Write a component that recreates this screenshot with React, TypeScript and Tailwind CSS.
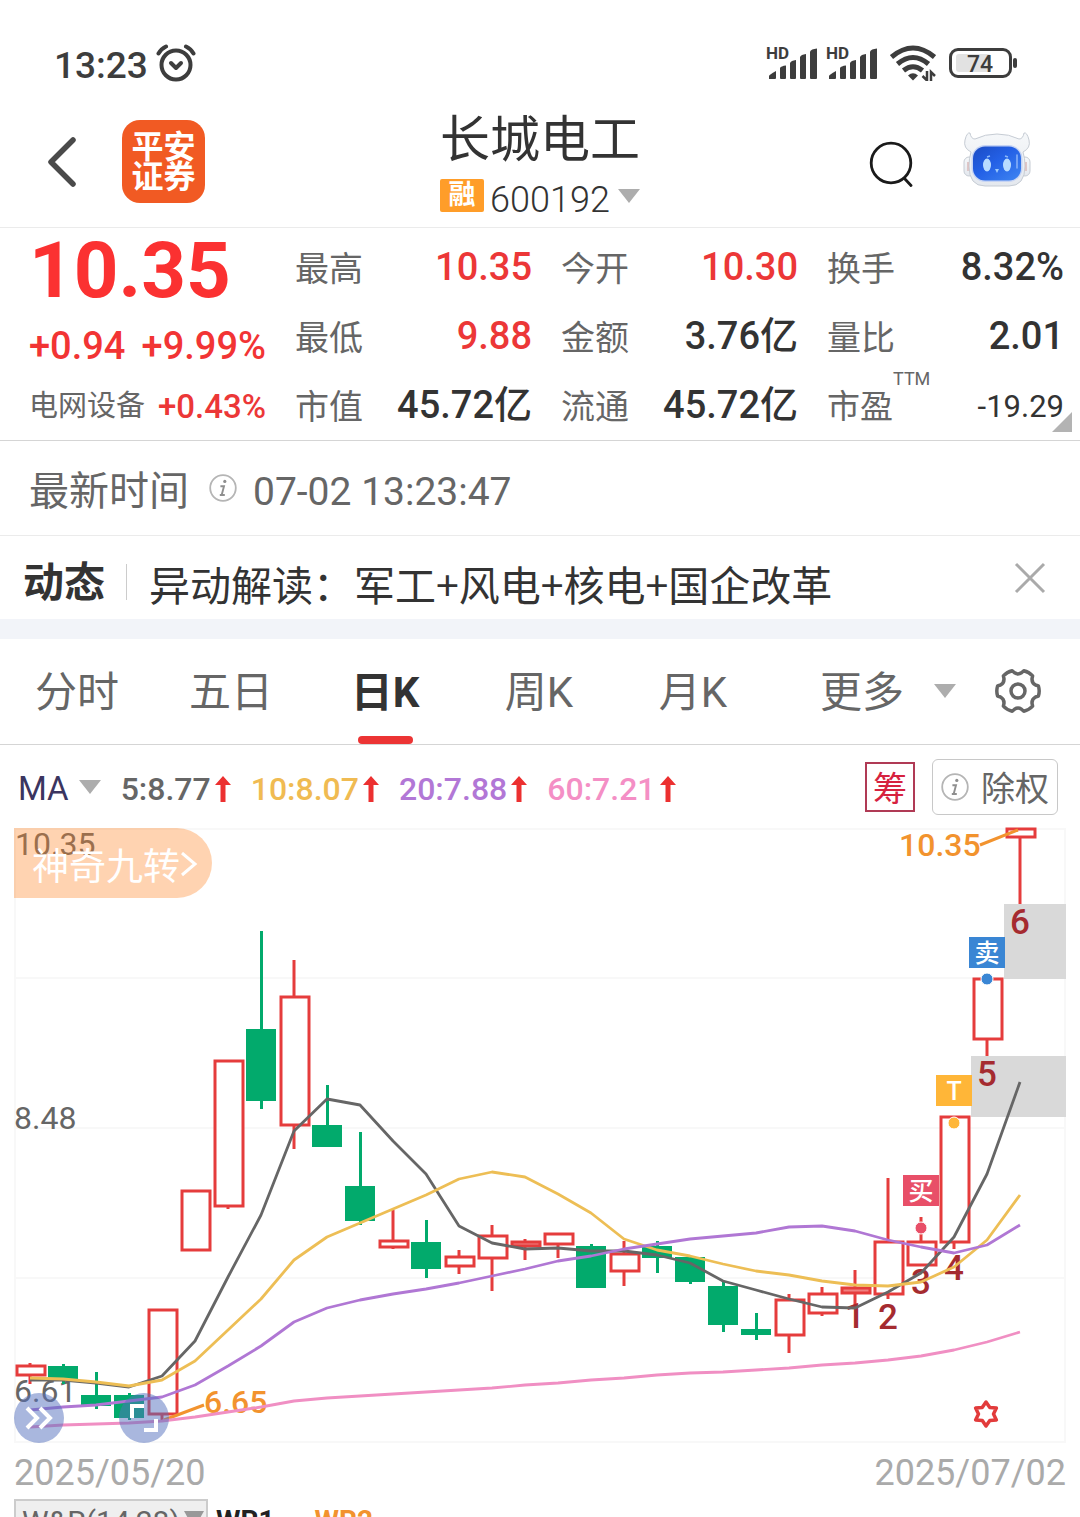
import React from "react";

type Candle = { up: boolean; high: number; top: number; bottom: number; low: number };

const c = (up: boolean, high: number, top: number, bottom: number, low: number): Candle => ({ up, high, top, bottom, low });

const candles: Candle[] = [
  c(true, 1363, 1365, 1376, 1384),
  c(false, 1364, 1366, 1379, 1384),
  c(false, 1372, 1395, 1406, 1409),
  c(false, 1393, 1395, 1418, 1420),
  c(true, 1309, 1309, 1415, 1421),
  c(true, 1190, 1190, 1251, 1251),
  c(true, 1060, 1060, 1207, 1209),
  c(false, 931, 1029, 1101, 1109),
  c(true, 960, 996, 1126, 1149),
  c(false, 1085, 1125, 1147, 1147),
  c(false, 1132, 1186, 1221, 1225),
  c(true, 1210, 1240, 1248, 1249),
  c(false, 1220, 1242, 1269, 1278),
  c(true, 1250, 1256, 1267, 1274),
  c(true, 1225, 1235, 1259, 1291),
  c(true, 1239, 1241, 1247, 1260),
  c(true, 1233, 1233, 1245, 1258),
  c(false, 1244, 1246, 1288, 1288),
  c(true, 1241, 1253, 1272, 1286),
  c(false, 1241, 1246, 1258, 1273),
  c(false, 1257, 1257, 1282, 1284),
  c(false, 1282, 1286, 1325, 1332),
  c(false, 1313, 1329, 1335, 1340),
  c(true, 1294, 1299, 1336, 1353),
  c(true, 1287, 1293, 1314, 1316),
  c(true, 1270, 1287, 1294, 1307),
  c(true, 1178, 1241, 1295, 1299),
  c(true, 1217, 1241, 1266, 1266),
  c(true, 1116, 1116, 1243, 1249),
  c(true, 978, 978, 1040, 1056),
  c(true, 828, 828, 838, 904),
];

const ma5 = [1380, 1380, 1383, 1387, 1376, 1341, 1277, 1215, 1131, 1099, 1105, 1141, 1174, 1226, 1243, 1249, 1248, 1251, 1251, 1255, 1263, 1281, 1290, 1299, 1307, 1308, 1292, 1273, 1237, 1174, 1082];
const ma10 = [1378, 1379, 1382, 1386, 1380, 1361, 1330, 1299, 1260, 1237, 1223, 1209, 1195, 1179, 1172, 1177, 1194, 1213, 1239, 1250, 1256, 1264, 1271, 1275, 1281, 1285, 1286, 1282, 1267, 1240, 1195];
const ma20 = [1410, 1407, 1405, 1401, 1397, 1385, 1366, 1346, 1322, 1308, 1300, 1294, 1289, 1283, 1276, 1269, 1261, 1256, 1249, 1244, 1239, 1236, 1233, 1227, 1226, 1231, 1240, 1247, 1253, 1245, 1225];
const ma60 = [1427, 1425, 1424, 1423, 1421, 1417, 1412, 1407, 1401, 1398, 1396, 1394, 1392, 1390, 1388, 1385, 1383, 1380, 1378, 1375, 1373, 1372, 1370, 1368, 1365, 1363, 1360, 1356, 1350, 1342, 1332];

const xOf = (i: number) => 30 + 33 * i;
const line = (ys: number[]) => ys.map((y, i) => `${xOf(i)},${y}`).join(" ");

const polar = (r: number, deg: number) => {
  const a = (deg * Math.PI) / 180;
  return `${(r * Math.cos(a)).toFixed(1)} ${(r * Math.sin(a)).toFixed(1)}`;
};
const gearPath =
  [0, 60, 120, 180, 240, 300]
    .map((a, i) => `${i === 0 ? "M" : "L"}${polar(21, a - 14)} Q${polar(22, a)} ${polar(21, a + 14)} L${polar(18.5, a + 19)} Q${polar(16, a + 30)} ${polar(18.5, a + 41)}`)
    .join(" ") + "Z";
const starPath =
  Array.from({ length: 12 }, (_, i) => `${i === 0 ? "M" : "L"}${polar(i % 2 ? 7.5 : 12, i * 30 - 90)}`).join(" ") + "Z";

function Caret() {
  return (
    <svg className="h-[14px] w-[22px] shrink-0" viewBox="0 0 22 14" aria-hidden="true">
      <path d="M0 0H22L11 14Z" fill="#adadad" />
    </svg>
  );
}

function Info() {
  return (
    <svg className="size-7 shrink-0" viewBox="0 0 28 28" aria-hidden="true">
      <circle cx="14" cy="14" r="12.8" fill="none" stroke="#b5b5b5" strokeWidth="1.8" />
      <circle cx="15.8" cy="7.4" r="1.6" fill="#8f8f8f" />
      <path d="M11.400 12.200H15L12.800 20.600M10.800 21H15.800" fill="none" stroke="#8f8f8f" strokeWidth="1.900" />
    </svg>
  );
}

function Signal() {
  return (
    <svg className="h-9 w-[52px] overflow-visible" viewBox="0 0 52 36" fill="#3d3d3d" role="img" aria-label="HD signal">
      <text x="0" y="14" fontFamily="Roboto, sans-serif" fontWeight="700" fontSize="17">HD</text>
      <path d="M3 34V31Q3 30 10 26V33Q10 34 9 34H4Q3 34 3 34Z" />
      <path d="M14 33V23Q15 21 20 20.500V33Q20 34 19 34H15Q14 34 14 33Z" />
      <path d="M24 33V18Q25 15.500 30 15V33Q30 34 29 34H25Q24 34 24 33Z" />
      <path d="M34 33V12Q35 9.500 40 9V33Q40 34 39 34H35Q34 34 34 33Z" />
      <path d="M44 33V6.500Q45 4 51 3.500V33Q51 34 50 34H45Q44 34 44 33Z" />
    </svg>
  );
}

function StatusBar() {
  return (
    <div className="flex h-[100px] items-center justify-between pt-[26px] pr-[62px] pl-[54px] text-[#3d3d3d]">
      <div className="flex items-center gap-2">
        <span className="pt-1 text-[37px] leading-none font-medium">13:23</span>
        <svg className="size-10" viewBox="0 0 40 40" fill="none" stroke="#3d3d3d" strokeWidth="4" strokeLinecap="round" strokeLinejoin="round" aria-label="闹钟">
          <circle cx="20" cy="22" r="14.500" />
          <path d="M15 20L20 25L25 20" />
          <path d="M2.500 10.500Q5 6 10 3.500M37.500 10.500Q35 6 30 3.500" />
        </svg>
      </div>
      <div className="flex items-center gap-2">
        <Signal />
        <Signal />
        <svg className="mx-1 h-9 w-[46px]" viewBox="0 0 46 36" fill="none" stroke="#3d3d3d" strokeWidth="5" aria-label="Wi-Fi">
          <path d="M1.500 12Q23 -6 44.500 12" />
          <path d="M7.500 19Q23 6 38.500 19" />
          <path d="M13.500 25.500Q23 18 32.500 25.500" />
          <path d="M18 30.500Q23 26 28 30.500L23 35.500Z" fill="#3d3d3d" stroke="none" />
          <path d="M37 26V35.500L32.500 31M41 36V27L45 31" strokeWidth="2.500" />
        </svg>
        <svg className="h-[30px] w-[70px] overflow-visible" viewBox="0 0 70 30" aria-label="电量 74">
          <rect x="8" y="6" width="35" height="18" rx="3" fill="#e2e2e2" />
          <rect x="2.500" y="1.500" width="60" height="27" rx="7.500" fill="none" stroke="#3d3d3d" strokeWidth="3" />
          <rect x="65" y="10" width="4" height="10" rx="2" fill="#3d3d3d" />
          <text x="32" y="23.500" textAnchor="middle" fontFamily="Roboto, sans-serif" fontWeight="500" fontSize="23" fill="#3d3d3d">74</text>
        </svg>
      </div>
    </div>
  );
}

function Robot() {
  return (
    <svg className="h-[56px] w-[68px]" viewBox="0 0 68 56" aria-hidden="true">
      <defs>
        <linearGradient id="shell" x1="0" y1="0" x2="0" y2="1">
          <stop offset="0" stopColor="#f6f8fa" />
          <stop offset="1" stopColor="#e4e8ee" />
        </linearGradient>
        <linearGradient id="face" x1="0" y1="0" x2="1" y2="1">
          <stop offset="0" stopColor="#1c4cc4" />
          <stop offset="0.45" stopColor="#2360e6" />
          <stop offset="1" stopColor="#3f86f2" />
        </linearGradient>
      </defs>
      <g fill="url(#shell)" stroke="#c6ccd4" strokeWidth="1">
        <rect x="1" y="25" width="10" height="19" rx="5" />
        <rect x="57" y="25" width="10" height="19" rx="5" />
        <path d="M8 20Q0 16 2 8Q4 0 7 1Q8 7 12 7Q22 2 34 2Q46 2 56 7Q60 7 61 1Q64 0 66 8Q68 16 60 20Q62 26 62 34Q62 54 46 54H22Q6 54 6 34Q6 26 8 20Z" />
      </g>
      <path d="M5 30V39M63 30V39" stroke="#d9b9b9" strokeWidth="1.500" />
      <rect x="8.500" y="13" width="51" height="37" rx="14" fill="#c5d3f4" />
      <rect x="10" y="14.500" width="48" height="34" rx="12" fill="url(#face)" />
      <ellipse cx="24" cy="33" rx="4" ry="6.500" fill="#b8dcff" />
      <ellipse cx="44" cy="33" rx="4" ry="6.500" fill="#b8dcff" />
      <path d="M24 25L27 24M42 24L45 25" stroke="#8cb9f8" strokeWidth="1.500" />
      <path d="M32 37H36L34 41Z" fill="#9cc9fb" />
      <path d="M54 23V36" stroke="#8db4f8" strokeWidth="1.500" strokeLinecap="round" />
    </svg>
  );
}

function Header() {
  return (
    <header className="grid h-32 grid-cols-[1fr_auto_1fr] items-center border-b border-[#ebebeb]">
      <div className="flex items-center pb-1 pl-[46px]">
        <button type="button" aria-label="返回" className="mr-[44px]">
          <svg className="h-[52px] w-8" viewBox="0 0 32 52" fill="none" stroke="#4a4a4a" strokeWidth="5.500" strokeLinecap="round" strokeLinejoin="round">
            <path d="M27 4L5 26L27 48" />
          </svg>
        </button>
        <a href="#pingan" className="grid size-[83px] place-content-center rounded-[18px] bg-[#f15a23] text-center text-[32px] leading-[30px] font-bold text-white">
          <span>平安</span>
          <span>证券</span>
        </a>
      </div>
      <div className="flex flex-col items-center pt-1">
        <h1 className="text-[50px] leading-[64px] text-[#333]">长城电工</h1>
        <button type="button" className="flex h-[52px] items-center">
          <span className="mb-1 flex h-[33px] w-11 items-center justify-center rounded-[2px] bg-[#ff9d29] text-[27px] leading-none font-bold text-white">融</span>
          <span className="ml-[6px] pt-1 text-[36px] leading-none font-light text-[#333]">600192</span>
          <span className="mb-1 ml-2"><Caret /></span>
        </button>
      </div>
      <div className="flex items-center justify-end pr-[49px]">
        <button type="button" aria-label="搜索" className="mr-12">
          <svg className="size-[46px]" viewBox="0 0 46 46" fill="none" stroke="#1a1a1a" strokeWidth="2.800" strokeLinecap="round">
            <circle cx="22" cy="22" r="19.800" />
            <path d="M35.500 37.500L42 44.500" />
          </svg>
        </button>
        <button type="button" aria-label="智能助手" className="mb-2"><Robot /></button>
      </div>
    </header>
  );
}

function Stat({ label, value, tone = "text-[#333]" }: { label: string; value: string; tone?: string }) {
  return (
    <div className="flex items-center justify-between leading-none whitespace-nowrap">
      <span className="pt-1 text-[34px] text-[#666]">{label}</span>
      <span className={`text-[38px] font-medium ${tone}`}>{value}</span>
    </div>
  );
}

function Quote() {
  return (
    <section className="relative grid auto-rows-[69px] grid-cols-4 gap-x-[29px] border-b border-[#d5d5d5] pt-1 pr-4 pb-px pl-[29px] whitespace-nowrap">
      <div className="flex items-center pt-2 text-[78px] leading-none font-bold text-[#fb3131]">10.35</div>
      <Stat label="最高" value="10.35" tone="text-[#ec3737]" />
      <Stat label="今开" value="10.30" tone="text-[#ec3737]" />
      <Stat label="换手" value="8.32%" />
      <div className="flex items-center justify-between pt-5 text-[38px] leading-none font-medium text-[#f23434]">
        <span>+0.94</span>
        <span>+9.99%</span>
      </div>
      <Stat label="最低" value="9.88" tone="text-[#ec3737]" />
      <Stat label="金额" value="3.76亿" />
      <Stat label="量比" value="2.01" />
      <div className="flex items-center justify-between leading-none">
        <span className="pt-1 text-[29px] text-[#666]">电网设备</span>
        <span className="pt-1 text-[33px] font-medium text-[#ec3737]">+0.43%</span>
      </div>
      <Stat label="市值" value="45.72亿" />
      <Stat label="流通" value="45.72亿" />
      <div className="flex items-center justify-between leading-none">
        <span className="flex pt-1 text-[33px] text-[#666]">
          市盈<span className="-mt-5 text-[18px] leading-none">TTM</span>
        </span>
        <span className="pt-1 text-[31px] text-[#333]">-19.29</span>
      </div>
      <svg className="absolute right-2 bottom-2 size-5" viewBox="0 0 20 20" aria-hidden="true">
        <path d="M20 0V20H0Z" fill="#b3b3b3" />
      </svg>
    </section>
  );
}

function Tabs() {
  const tabs = ["分时", "五日", "日K", "周K", "月K"];
  return (
    <nav className="grid h-[106px] grid-cols-[repeat(5,154fr)_225fr_85fr] border-b border-[#d5d5d5] text-[42px] leading-none text-[#666]">
      {tabs.map((t) =>
        t === "日K" ? (
          <button key={t} type="button" aria-current="page" className="flex flex-col items-center justify-between pt-[33px] font-bold text-[#333]">
            {t}
            <span className="h-2 w-[55px] rounded-full bg-[#ec3434]" />
          </button>
        ) : (
          <button key={t} type="button" className="flex flex-col items-center pt-[33px]">{t}</button>
        ),
      )}
      <button type="button" className="flex items-start gap-[30px] pt-[33px] pl-[50px]">
        更多
        <span className="flex h-[38px] items-center"><Caret /></span>
      </button>
      <button type="button" aria-label="设置" className="flex items-start pt-[29px]">
        <svg className="size-[46px]" viewBox="-23 -23 46 46" fill="none" stroke="#666" strokeWidth="3.500" strokeLinejoin="round">
          <path d={gearPath} />
          <circle r="7" />
        </svg>
      </button>
    </nav>
  );
}

const averages = [
  { text: "5:8.77", tone: "text-[#666]" },
  { text: "10:8.07", tone: "text-[#f0bb52]" },
  { text: "20:7.88", tone: "text-[#b277d6]" },
  { text: "60:7.21", tone: "text-[#f48fc5]" },
];

function AverageBar() {
  return (
    <div className="flex h-[83px] items-center justify-between pr-[22px] pl-[18px] leading-none">
      <div className="flex items-center gap-5 pt-1">
        <button type="button" className="flex items-center gap-[10px] text-[33px] text-[#3b3560]">
          MA <span className="mb-1"><Caret /></span>
        </button>
        {averages.map((a) => (
          <span key={a.text} className="flex items-center gap-1">
            <span className={`text-[32px] font-medium ${a.tone}`}>{a.text}</span>
            <svg className="h-[26px] w-4" viewBox="0 0 16 26" aria-label="上升">
              <path d="M8 0L16 9H10.500V26H5.500V9H0Z" fill="#ec3030" />
            </svg>
          </span>
        ))}
      </div>
      <div className="flex items-center gap-[17px]">
        <button type="button" className="flex size-[50px] items-center justify-center border-2 border-[#b03a55] pt-1 text-[34px] text-[#d6223f]">筹</button>
        <button type="button" className="flex h-14 items-center gap-3 rounded-md border border-[#c8c8c8] px-2 text-[34px] text-[#666]">
          <Info /><span className="pt-1">除权</span>
        </button>
      </div>
    </div>
  );
}

const turns = [
  { n: 1, x: 855, y: 1328 },
  { n: 2, x: 888, y: 1329 },
  { n: 3, x: 921, y: 1294 },
  { n: 4, x: 954, y: 1280 },
  { n: 5, x: 987, y: 1086 },
  { n: 6, x: 1020, y: 934 },
];

const marks = [
  { t: "卖", x: 969, y: 937, dx: 987, dy: 979, fill: "#3a86d4" },
  { t: "T", x: 936, y: 1075, dx: 954, dy: 1123, fill: "#ffb638" },
  { t: "买", x: 903, y: 1175, dx: 921, dy: 1228, fill: "#e84f68" },
];

function Chart() {
  return (
    <section className="relative">
      <svg className="block h-auto w-full overflow-visible" viewBox="0 828 1080 615" fontFamily="Roboto, 'Noto Sans CJK SC', sans-serif" role="img" aria-label="长城电工日K线">
        <g stroke="#f8f8f8" strokeWidth="2">
          {[829, 978, 1128, 1278, 1442].map((y) => (
            <line key={y} x1="14" x2="1066" y1={y} y2={y} />
          ))}
          <line x1="15" x2="15" y1="828" y2="1443" />
          <line x1="1065" x2="1065" y1="828" y2="1443" />
        </g>
        <rect x="1004" y="904" width="62" height="75" fill="#d9d9d9" />
        <rect x="971" y="1056" width="95" height="61" fill="#d9d9d9" />
        <g fontSize="32" fill="#666">
          <text x="15" y="855">10.35</text>
          <text x="14" y="1129">8.48</text>
          <text x="14" y="1402">6.61</text>
        </g>
        <g fontSize="32" fontWeight="500" fill="#f2932e">
          <text x="899" y="856">10.35</text>
          <text x="204" y="1413">6.65</text>
        </g>
        {candles.map((k, i) => {
          const x = xOf(i);
          return k.up ? (
            <g key={i} stroke="#e53c3c" strokeWidth="3" fill="none">
              <path d={`M${x} ${k.high}V${k.top}M${x} ${k.bottom}V${k.low}`} />
              <rect x={x - 13} y={k.top + 1} width="28" height={k.bottom - k.top - 2} fill={i === 15 || i === 25 ? "#f08080" : "#fff"} />
            </g>
          ) : (
            <g key={i} fill="#02aa6c">
              <rect x={x - 1} y={k.high} width="3" height={k.low - k.high} />
              <rect x={x - 15} y={k.top} width="30" height={k.bottom - k.top} />
            </g>
          );
        })}
        <path d="M980 845L1018 830M204 1405L164 1420" stroke="#f2932e" strokeWidth="3" />
        <g fontSize="35" fontWeight="500" fill="#a52b30" textAnchor="middle">
          {turns.map((t) => (
            <text key={t.n} x={t.x} y={t.y}>{t.n}</text>
          ))}
        </g>
        <g fill="none" strokeWidth="2.800" strokeLinejoin="round">
          <polyline points={line(ma60)} stroke="#f08fc3" />
          <polyline points={line(ma5)} stroke="#666" />
          <polyline points={line(ma10)} stroke="#edbe55" />
          <polyline points={line(ma20)} stroke="#b077d4" />
        </g>
        {marks.map((m) => (
          <g key={m.t}>
            <rect x={m.x} y={m.y} width="36" height="31" fill={m.fill} />
            <text x={m.x + 18} y={m.y + 25} fontSize="25" fontWeight="500" fill="#fff" textAnchor="middle">{m.t}</text>
            <circle cx={m.dx} cy={m.dy} r="6" fill={m.fill} stroke="#fff" strokeWidth="1" />
          </g>
        ))}
        <path d={starPath} transform="translate(986 1414)" fill="none" stroke="#e23b3b" strokeWidth="3.500" strokeLinejoin="round" />
      </svg>
      <button type="button" className="absolute top-0 left-[14px] flex h-[70px] w-[198px] items-center rounded-r-full bg-[rgba(255,129,32,0.35)] pt-1 pl-[18px] text-[37px] leading-none whitespace-nowrap text-white">
        <span className="pt-1">神奇九转</span>
        <svg className="h-[26px] w-[18px]" viewBox="0 0 18 26" fill="none" stroke="#fff" strokeWidth="3">
          <path d="M2 1L15 12L2 23" />
        </svg>
      </button>
      <button type="button" aria-label="展开" className="absolute bottom-0 left-[14px] flex size-[50px] items-center justify-center rounded-full bg-[rgba(83,111,189,0.5)]">
        <svg className="size-[30px]" viewBox="0 0 30 30" fill="none" stroke="#fff" strokeWidth="4">
          <path d="M3 5L13 15L3 25M16 5L26 15L16 25" />
        </svg>
      </button>
      <button type="button" aria-label="全屏" className="absolute bottom-0 left-[119px] flex size-[50px] items-center justify-center rounded-full bg-[rgba(83,111,189,0.5)]">
        <svg className="size-[30px]" viewBox="0 0 30 30" fill="none" stroke="#fff" strokeWidth="4">
          <path d="M3 15V3H15M27 16V27H15" />
        </svg>
      </button>
    </section>
  );
}

export default function App() {
  return (
    <main className="flex h-screen w-full flex-col overflow-hidden bg-white font-['Roboto','Noto_Sans_CJK_SC',sans-serif] *:shrink-0" lang="zh-CN">
      <StatusBar />
      <Header />
      <Quote />
      <div className="flex h-[95px] items-center border-b border-[#ebebeb] pl-[29px] leading-none text-[#666]">
        <span className="pt-2 text-[40px]">最新时间</span>
        <span className="mr-4 ml-5"><Info /></span>
        <time className="pt-2 text-[39px]">07-02 13:23:47</time>
      </div>
      <div className="flex h-[83px] items-center pt-2 pr-[34px] pl-[23px] text-[41px] leading-none text-[#333]">
        <strong className="pt-1 font-bold">动态</strong>
        <span className="mr-[22px] ml-[21px] h-9 w-px bg-[#ccc]" />
        <a href="#news" className="pt-1 font-['Noto_Sans_CJK_SC',sans-serif]">异动解读：军工+风电+核电+国企改革</a>
        <button type="button" aria-label="关闭" className="mb-2 ml-auto">
          <svg className="size-8" viewBox="0 0 32 32" fill="none" stroke="#aaa" strokeWidth="3">
            <path d="M2 2L30 30M30 2L2 30" />
          </svg>
        </button>
      </div>
      <div className="h-5 bg-[#f2f4f9]" />
      <Tabs />
      <AverageBar />
      <Chart />
      <div className="flex h-14 items-center justify-between px-[14px] pt-1 text-[36px] leading-none text-[#aaa]">
        <time>2025/05/20</time>
        <time>2025/07/02</time>
      </div>
      <div className="flex items-start pl-[14px] leading-none">
        <button type="button" className="flex h-12 w-[194px] items-start justify-between border-2 border-[#ccc] bg-[#efefef] pt-[6px] pr-[2px] pl-[6px] text-[30px] text-[#666]">
          W&amp;R(14,28)
          <svg className="mt-1 h-[18px] w-5" viewBox="0 0 20 18" aria-hidden="true"><path d="M0 0H20L10 18Z" fill="#999" /></svg>
        </button>
        <span className="ml-2 pt-2 text-[28px] font-bold text-[#222]">WR1</span>
        <span className="ml-10 pt-2 text-[28px] font-bold text-[#f2932e]">WR2</span>
      </div>
    </main>
  );
}
